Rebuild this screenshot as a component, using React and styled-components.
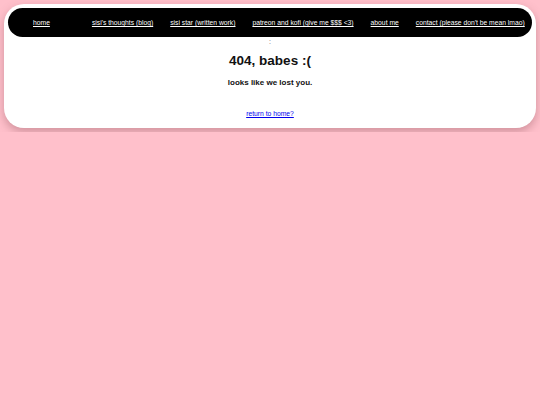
import React from "react";
import styled, { createGlobalStyle } from "styled-components";

const Global = createGlobalStyle`
  html, body { margin: 0; padding: 0; background: #ffc0cb; }
  body { font-family: "Liberation Sans", Arial, sans-serif; }
`;

const Page = styled.div`
  padding: 4px;
`;

const Card = styled.main`
  background: #fff;
  border-radius: 20px;
  box-shadow: 0 4px 10px rgba(120, 60, 70, 0.35);
  padding: 4px 4px 0;
  height: 124px;
  box-sizing: border-box;
  display: flex;
  flex-direction: column;
  align-items: center;
`;

const Nav = styled.nav`
  align-self: stretch;
  height: 29px;
  background: #000;
  border-radius: 15px;
  display: flex;
  align-items: center;
  padding-left: 25px;
  gap: 17px;
`;

const NavLink = styled.a`
  color: #fff;
  font-size: 6.75px;
  text-decoration: underline;
  white-space: nowrap;
  margin-right: ${(p) => (p.$wide ? "25px" : "0")};
`;

const Dots = styled.div`
  font-size: 7px;
  color: #666;
  line-height: 7px;
  margin-top: 1px;
  height: 7px;
`;

const Title = styled.h1`
  margin: 8px 0 0;
  font-size: 13.5px;
  font-weight: bold;
  color: #111;
  line-height: 16px;
`;

const Sub = styled.p`
  margin: 9px 0 0;
  font-size: 8px;
  font-weight: bold;
  color: #111;
  line-height: 10px;
`;

const Home = styled.a`
  margin-top: 22px;
  font-size: 6.75px;
  color: #0000ee;
  text-decoration: underline;
`;

const links = [
  "sisi's thoughts (blog)",
  "sisi star (written work)",
  "patreon and kofi (give me $$$ <3)",
  "about me",
  "contact (please don't be mean lmao)",
];

export default function App() {
  return (
    <Page>
      <Global />
      <Card>
        <Nav>
          <NavLink href="#" $wide>home</NavLink>
          {links.map((l) => (
            <NavLink href="#" key={l}>{l}</NavLink>
          ))}
        </Nav>
        <Dots>:</Dots>
        <Title>404, babes :(</Title>
        <Sub>looks like we lost you.</Sub>
        <Home href="#">return to home?</Home>
      </Card>
    </Page>
  );
}
